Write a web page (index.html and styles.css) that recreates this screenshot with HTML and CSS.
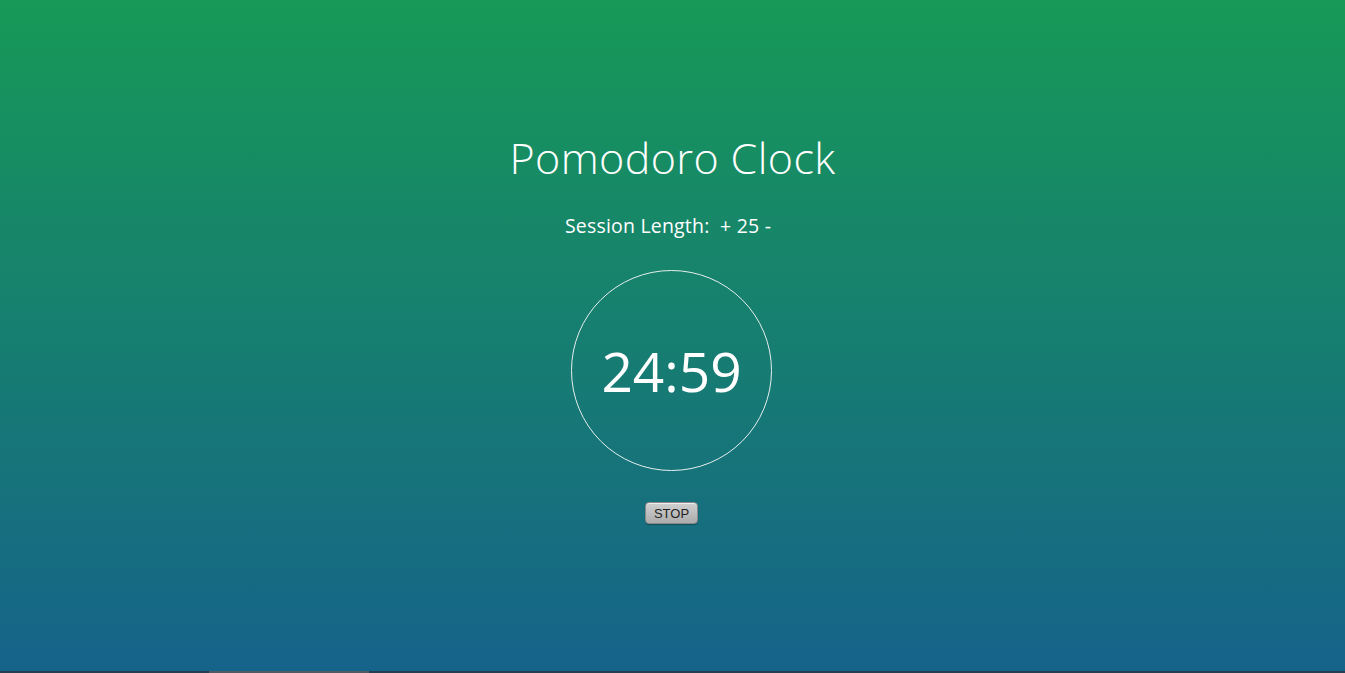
FILE: index.html
```html
<!DOCTYPE html>
<html>
<head>
<meta charset="utf-8">
<title>Pomodoro Clock</title>
<link rel="stylesheet" href="styles.css">
</head>
<body>
<div class="page">
  <main class="app">
    <h1 class="title">Pomodoro Clock</h1>
    <div class="session">Session Length:&nbsp; <span class="ctrl">+</span> 25 <span class="ctrl">-</span></div>
    <div class="clock"><span class="time">24:59</span></div>
    <button class="stop">STOP</button>
  </main>
  <div class="scrollbar"><div class="thumb"></div></div>
</div>
</body>
</html>
```
FILE: styles.css
```css
html, body {
  margin: 0;
  padding: 0;
  height: 100%;
  overflow: hidden;
}
.page {
  height: 673px;
  display: flex;
  flex-direction: column;
  background: linear-gradient(to bottom, #179957 0%, #16638a 100%);
  font-family: "Open Sans", "DejaVu Sans", sans-serif;
  color: #fff;
}
.app {
  flex: 1;
  display: flex;
  flex-direction: column;
  align-items: center;
}
.title {
  margin: 131px 0 0 0;
  font-weight: 300;
  font-size: 43px;
  line-height: 54px;
  letter-spacing: 0.4px;
}
.session {
  margin-top: 28px;
  margin-right: 9px;
  font-size: 19.5px;
  line-height: 26px;
  letter-spacing: 0.2px;
}
.clock {
  margin-top: 31px;
  margin-right: 2px;
  width: 199px;
  height: 199px;
  border: 1px solid #e6eeee;
  border-radius: 50%;
  display: flex;
  align-items: center;
  justify-content: center;
}
.time {
  font-size: 55px;
  font-weight: 400;
  line-height: 1;
}
.stop {
  margin-top: 31px;
  margin-right: 2px;
  width: 53px;
  height: 22px;
  padding: 0;
  font-family: "Liberation Sans", Arial, sans-serif;
  font-size: 13px;
  color: #222;
  background: linear-gradient(to bottom, #d0d0d0, #acacac);
  border: 1px solid #8a8a8a;
  border-radius: 4px;
  box-shadow: inset 0 1px 0 #eee, 0 1px 1px rgba(0,0,0,0.3);
}
.scrollbar {
  height: 2px;
  background: #253e50;
  display: flex;
}
.thumb {
  margin-left: 209px;
  width: 160px;
  background: #505a62;
}
```
